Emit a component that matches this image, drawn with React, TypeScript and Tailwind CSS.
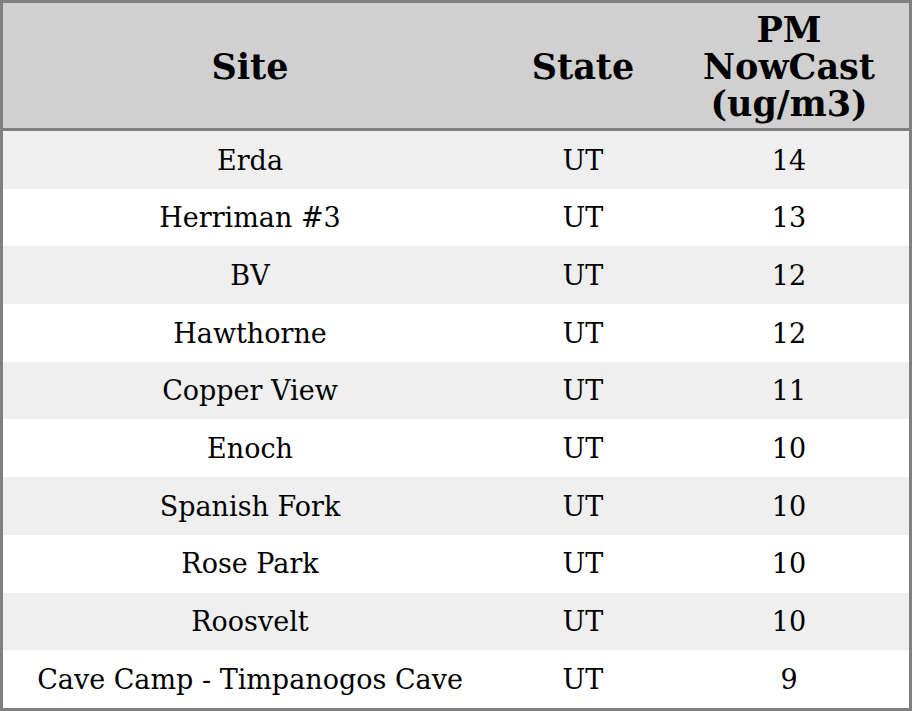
import React from 'react';

interface SiteRow {
    site: string;
    state: string;
    pm: number;
}

const rows: SiteRow[] = [
    { site: 'Erda', state: 'UT', pm: 14 },
    { site: 'Herriman #3', state: 'UT', pm: 13 },
    { site: 'BV', state: 'UT', pm: 12 },
    { site: 'Hawthorne', state: 'UT', pm: 12 },
    { site: 'Copper View', state: 'UT', pm: 11 },
    { site: 'Enoch', state: 'UT', pm: 10 },
    { site: 'Spanish Fork', state: 'UT', pm: 10 },
    { site: 'Rose Park', state: 'UT', pm: 10 },
    { site: 'Roosvelt', state: 'UT', pm: 10 },
    { site: 'Cave Camp - Timpanogos Cave', state: 'UT', pm: 9 },
];

const App: React.FC = () => {
    return (
        <div className="w-[912px] h-[711px] border-[3px] border-[#808080] bg-white font-['DejaVu_Serif',serif] text-black">
            <table className="w-full table-fixed border-separate border-spacing-0">
                <colgroup>
                    <col className="w-[494px]" />
                    <col className="w-[172px]" />
                    <col className="w-[240px]" />
                </colgroup>
                <thead>
                    <tr className="bg-[#d0d0d0]">
                        <th className="h-[128px] p-0 pt-[2px] border-b-[3px] border-[#808080] text-[35px] leading-[37px] font-bold text-center align-middle">Site</th>
                        <th className="h-[128px] p-0 pt-[2px] border-b-[3px] border-[#808080] text-[35px] leading-[37px] font-bold text-center align-middle">State</th>
                        <th className="h-[128px] p-0 pt-[2px] border-b-[3px] border-[#808080] text-[35px] leading-[37px] font-bold text-center align-middle">
                            PM
                            <br />
                            NowCast
                            <br />
                            (ug/m3)
                        </th>
                    </tr>
                </thead>
                <tbody>
                    {rows.map((r, i) => (
                        <tr key={r.site} className={i % 2 === 0 ? 'bg-[#efefef]' : 'bg-white'}>
                            <td className="h-[57.7px] p-0 pt-[2px] text-center align-middle text-[27px]">{r.site}</td>
                            <td className="h-[57.7px] p-0 pt-[2px] text-center align-middle text-[27px]">{r.state}</td>
                            <td className="h-[57.7px] p-0 pt-[2px] text-center align-middle text-[27px]">{r.pm}</td>
                        </tr>
                    ))}
                </tbody>
            </table>
        </div>
    );
};

export default App;
